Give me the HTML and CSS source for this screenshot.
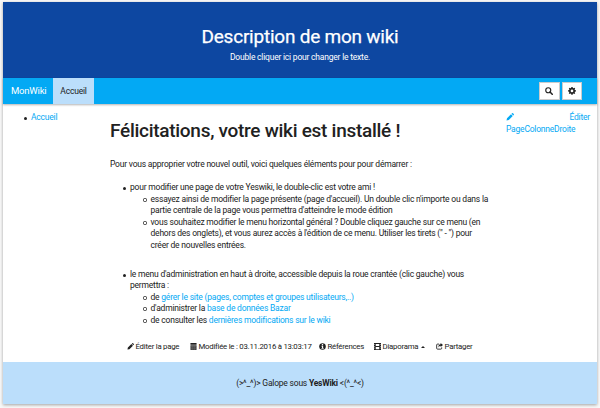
FILE: index.html
```html
<!DOCTYPE html>
<html lang="fr">
<head>
<meta charset="utf-8">
<title>MonWiki</title>
<link rel="stylesheet" href="styles.css">
</head>
<body>
<div class="page">
  <header class="banner">
    <h1 class="banner-title">Description de mon wiki</h1>
    <p class="banner-text">Double cliquer ici pour changer le texte.</p>
  </header>
  <nav class="navbar">
    <a class="brand">MonWiki</a>
    <a class="tab">Accueil</a>
    <div class="tools">
      <button class="tool" aria-label="Rechercher"><svg viewBox="0 0 16 16"><circle cx="6.5" cy="6.5" r="5" fill="none" stroke="currentColor" stroke-width="2.3"/><path d="M10 10l4.500 4.500" stroke="currentColor" stroke-width="3" stroke-linecap="round"/></svg></button>
      <button class="tool" aria-label="Administration"><svg viewBox="0 0 16 16"><path fill="currentColor" fill-rule="evenodd" d="M6.700 0h2.600l.4 2 1.200.5L12.600 1.400l1.800 1.800-1.100 1.700.5 1.200 2 .4v2.600l-2 .4-.5 1.200 1.100 1.700-1.800 1.800-1.700-1.100-1.200.5-.4 2H6.700l-.4-2-1.200-.5-1.700 1.100-1.800-1.800 1.100-1.700-.5-1.200-2-.4V6.500l2-.4.5-1.200L1.600 3.200l1.800-1.800 1.700 1.100L6.300 2zM8 5.200a2.700 2.700 0 1 0 0 5.400A2.700 2.700 0 0 0 8 5.200z"/></svg></button>
    </div>
  </nav>
  <div class="columns">
    <aside class="left"><ul><li><a>Accueil</a></li></ul></aside>
    <main class="content">
      <h2>Félicitations, votre wiki est installé !</h2>
      <p class="intro">Pour vous approprier votre nouvel outil, voici quelques éléments pour pour démarrer :</p>
      <ul class="list">
        <li>pour modifier une page de votre Yeswiki, le double-clic est votre ami !
          <ul>
            <li>essayez ainsi de modifier la page présente (page d'accueil). Un double clic n'importe ou dans la<br>partie centrale de la page vous permettra d'atteindre le mode édition</li>
            <li>vous souhaitez modifier le menu horizontal général ? Double cliquez gauche sur ce menu (en<br>dehors des onglets), et vous aurez accès à l'édition de ce menu. Utiliser les tirets (" - ") pour<br>créer de nouvelles entrées.</li>
          </ul>
        </li>
      </ul>
      <ul class="list">
        <li>le menu d'administration en haut à droite, accessible depuis la roue crantée (clic gauche) vous<br>permettra :
          <ul>
            <li>de <a>gérer le site (pages, comptes et groupes utilisateurs,..)</a></li>
            <li>d'administrer la <a>base de données Bazar</a></li>
            <li>de consulter les <a>dernières modifications sur le wiki</a></li>
          </ul>
        </li>
      </ul>
      <div class="actions">
        <span class="action edit"><svg viewBox="0 0 16 16"><path fill="currentColor" d="M1 15l1-4.500 8-8 3.500 3.500-8 8zM11 1.500l1-1q1-.8 2 0l1.500 1.500q.8 1 0 2l-1 1z"/></svg>Éditer la page</span>
        <span class="action date"><svg viewBox="0 0 16 16"><path fill="currentColor" d="M1 0h14v4H1z"/><path fill="#444" d="M1 5h14v11H1z"/><path d="M1 8h14M1 12h14M5 5v11M10 5v11" stroke="#777" stroke-width=".8"/></svg>Modifiée le : 03.11.2016 à 13:03:17</span>
        <span class="action refs"><svg viewBox="0 0 16 16"><circle cx="8" cy="8" r="7.500" fill="currentColor"/><path fill="#fff" d="M6.500 2.500h3v2.500h-3zM5.500 6.500h4v5h1.200v1.700H5.500v-1.700h1.200V8.200H5.500z"/></svg>Références</span>
        <span class="action slides"><svg viewBox="0 0 16 16"><path fill="currentColor" fill-rule="evenodd" d="M0 0h16v16H0zM4 2v5h8V2zM4 9v5h8V9zM1 3v1.500h1.500V3zM1 7v1.500h1.500V7zM1 11v1.500h1.500V11zM13.500 3v1.500H15V3zM13.500 7v1.500H15V7zM13.500 11v1.500H15V11z"/></svg>Diaporama<i class="caret"></i></span>
        <span class="action share"><svg viewBox="0 0 16 16"><path d="M7 2.500H3.500q-2 0-2 2v7.500q0 2 2 2H11q2 0 2-2v-2" fill="none" stroke="currentColor" stroke-width="2"/><path fill="currentColor" d="M10.500 0L16 4.500l-5.500 4.700V6.500Q7 6.500 6 10.500 4.500 3 10.500 2.800z"/></svg>Partager</span>
      </div>
    </main>
    <aside class="right">
      <a class="edit-line"><svg viewBox="0 0 16 16"><path fill="currentColor" d="M1 15l1-4.500 8-8 3.500 3.500-8 8zM11 1.500l1-1q1-.8 2 0l1.500 1.500q.8 1 0 2l-1 1z"/></svg><span>Éditer</span></a>
      <a>PageColonneDroite</a>
    </aside>
  </div>
  <footer class="footer">(&gt;^_^)&gt; Galope sous <b>YesWiki</b> &lt;(^_^&lt;)</footer>
</div>
</body>
</html>
```
FILE: styles.css
```css
* { box-sizing: border-box; }
body {
  margin: 0;
  padding: 2px 3px 4px;
  height: 408px;
  overflow: hidden;
  background: #f8f8f8;
  color: #212121;
  font: 8.500px/11.6px Roboto, "Liberation Sans", sans-serif;
  letter-spacing: -.21px;
  white-space: nowrap;
}
a { color: #03a9f4; text-decoration: none; }
svg { display: block; flex: none; }
h1, h2, p, ul { margin: 0; padding: 0; }
ul { list-style: none; }
li { position: relative; }
li::before {
  content: "";
  position: absolute;
  left: -7px;
  top: 5px;
  width: 3px;
  height: 3px;
  border-radius: 50%;
  background: #212121;
}
li li::before {
  left: -7.500px;
  top: 4px;
  width: 4px;
  height: 4px;
  background: radial-gradient(circle, #fff 0 1px, #444 1.300px 2px);
}
.page {
  display: flex;
  flex-direction: column;
  height: 402px;
  background: #fff;
  box-shadow: 0 1px 3px rgba(0, 0, 0, .35);
}
.banner {
  height: 76px;
  padding-top: 24px;
  background: #0d47a1;
  color: #fff;
  text-align: center;
}
.banner-title { font-size: 19px; line-height: 22px; font-weight: 400; letter-spacing: -.23px; -webkit-text-stroke: .25px; }
.banner-text { margin-top: 4px; }
.navbar {
  display: flex;
  height: 26px;
  background: #03a9f4;
  box-shadow: 0 1px 2px rgba(0, 0, 0, .3);
}
.brand { width: 50px; padding-left: 8px; color: #fff; font-size: 9.500px; line-height: 25px; letter-spacing: -.2px; }
.tab { width: 41px; background: #bbdefb; color: #212121; line-height: 26px; text-align: center; }
.tools { display: flex; gap: 2px; margin: 4px 15px 0 auto; }
.tool {
  display: flex;
  align-items: center;
  justify-content: center;
  width: 20.500px;
  height: 18px;
  padding: 0;
  border: 1px solid #ccc;
  background: #fff;
  color: #222;
}
.tool svg { width: 8px; height: 8px; }
.columns { display: flex; height: 258px; }
.left { width: 107px; padding: 8px 0 0 28px; }
.content { width: 396px; padding-top: 15px; }
.content h2 { font-size: 19px; line-height: 24px; font-weight: 500; letter-spacing: -.28px; }
.intro { margin-top: 16px; }
.list { margin-top: 11.500px; padding-left: 20px; }
.list + .list { margin-top: 17px; }
.list ul { padding-left: 20.500px; }
.right { width: 84px; padding-top: 8px; }
.edit-line { display: flex; justify-content: space-between; }
.edit-line svg { width: 8px; height: 8px; margin-top: 1px; }
.actions { display: flex; margin: 14.500px 0 0 17px; font-size: 7.800px; letter-spacing: -.24px; }
.action { display: flex; align-items: center; gap: 1.500px; }
.action svg { width: 7px; height: 7px; }
.edit { width: 63px; }
.date { width: 129px; }
.refs { width: 55px; }
.slides { width: 62px; }
.caret { margin-left: 1px; border: 2px solid transparent; border-top: 0; border-bottom: 2px solid #212121; }
.footer { height: 42px; background: #bbdefb; line-height: 42px; text-align: center; }
```
